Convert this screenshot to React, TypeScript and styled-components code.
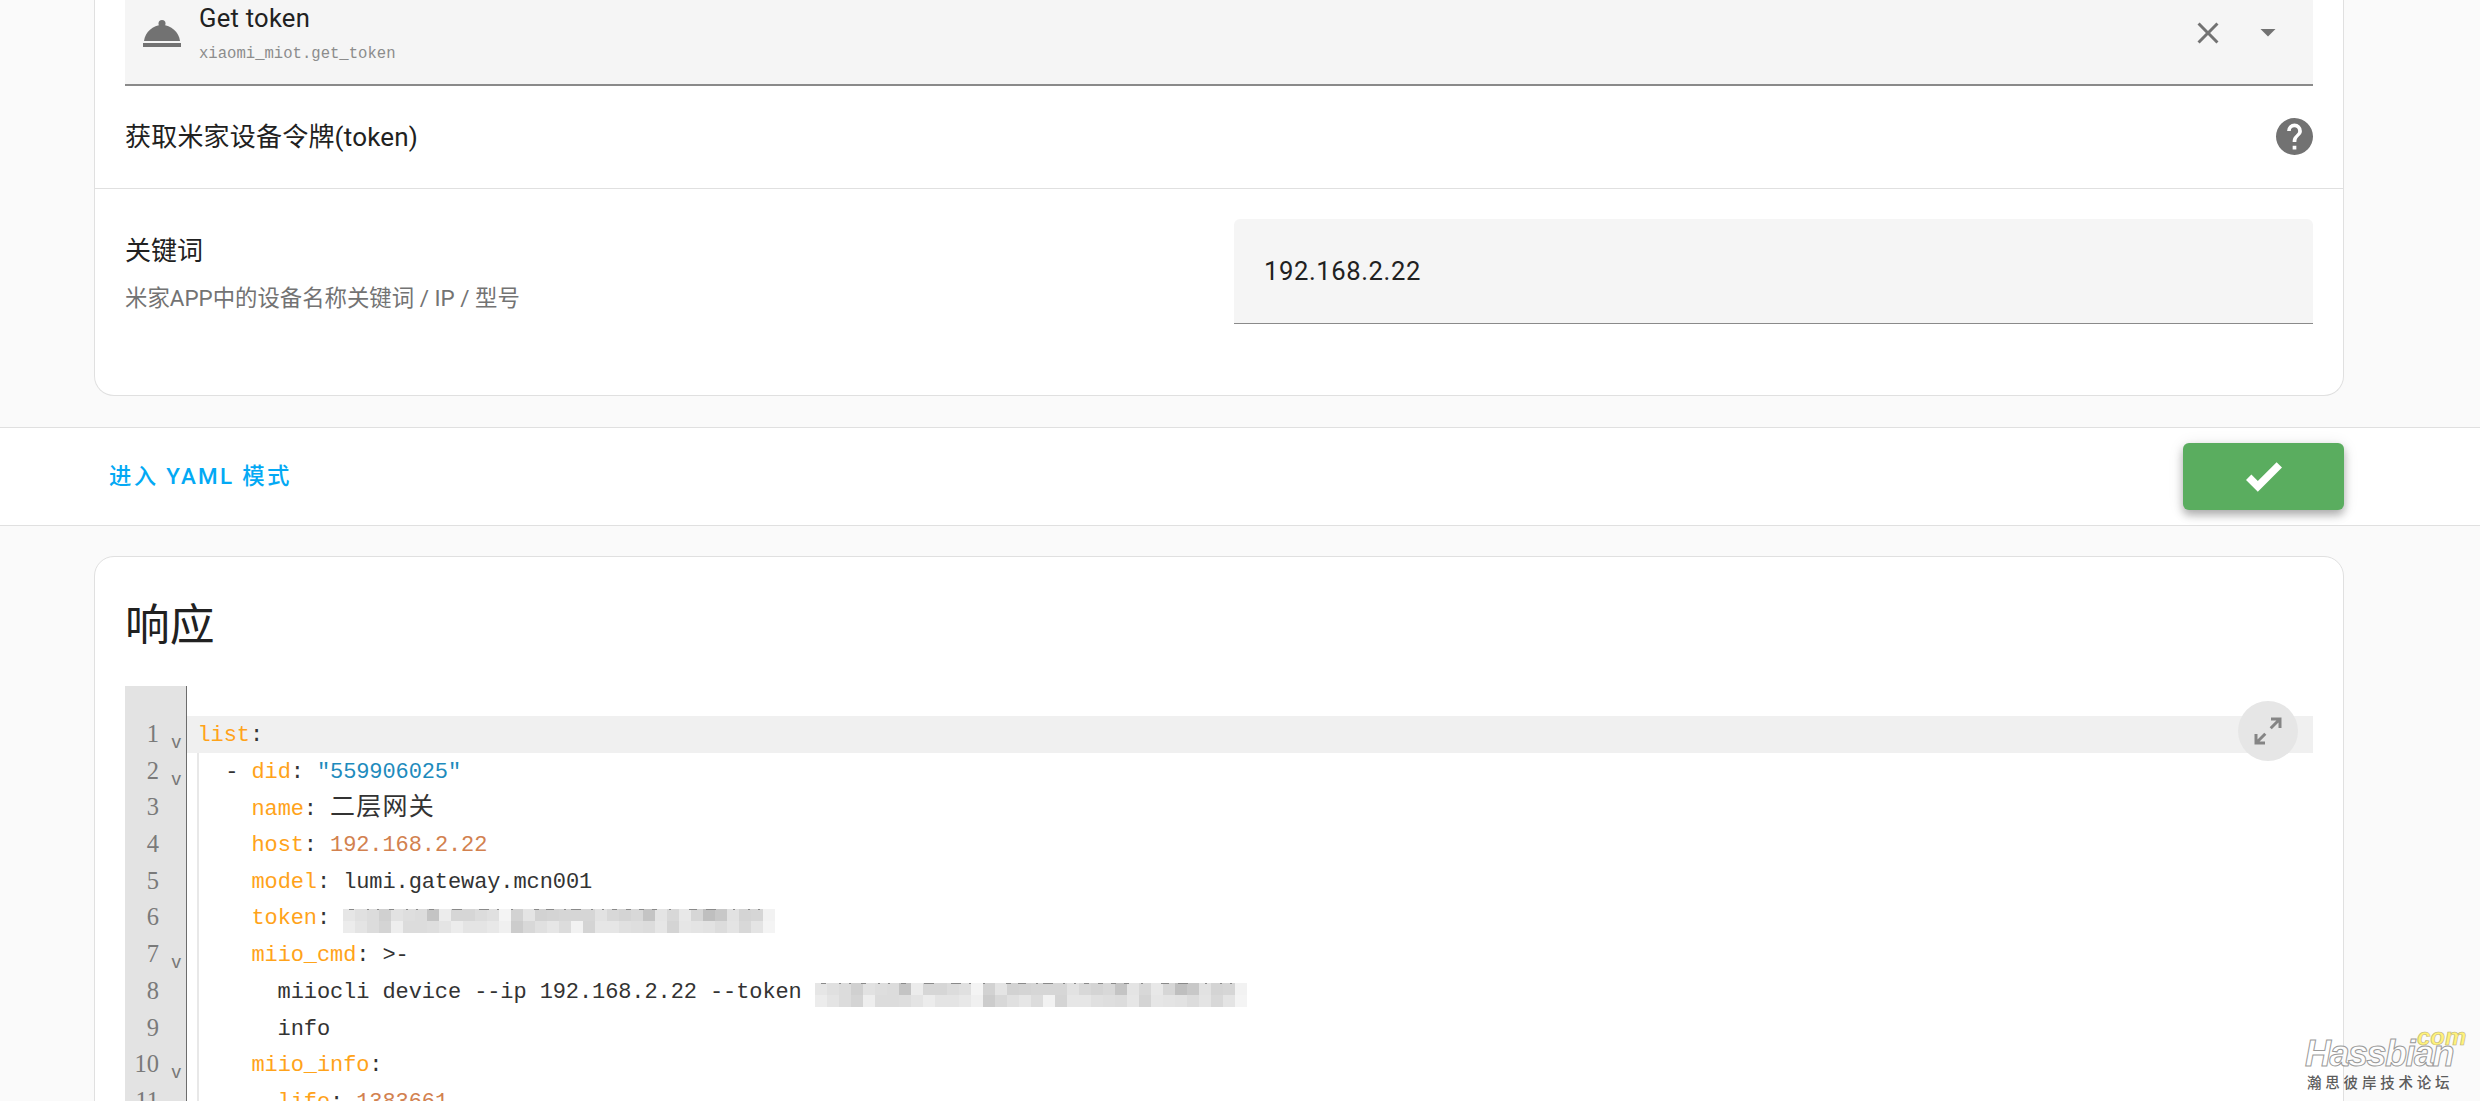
import styled, { createGlobalStyle } from "styled-components";

const SANS = `Roboto, "Noto Sans CJK SC", sans-serif`;
const MONO = `"Liberation Mono", "Noto Sans CJK SC", monospace`;

const GlobalStyle = createGlobalStyle`
  html, body {
    margin: 0;
    padding: 0;
    background: #fafafa;
  }
`;

const Page = styled.div`
  position: relative;
  height: 1101px;
  overflow: hidden;
  background: #fafafa;
  font-family: ${SANS};
  color: #212121;
`;

const Card = styled.section`
  box-sizing: border-box;
  width: 2250px;
  margin-left: 94px;
  background: #fff;
  border: 1px solid #e0e0e0;
`;

const FormCard = styled(Card)`
  height: 396px;
  border-top: none;
  border-radius: 0 0 20px 20px;
`;

const ResponseCard = styled(Card)`
  height: 560px;
  margin-top: 30px;
  padding: 0 30px;
  border-radius: 20px 20px 0 0;
`;

const Padded = styled.div`
  padding: 0 30px;
`;

const ServiceSelect = styled.div`
  box-sizing: border-box;
  height: 86px;
  display: flex;
  align-items: flex-start;
  background: #f5f5f5;
  border-bottom: 2px solid #8a8a8a;
`;

const BellIcon = styled.svg`
  flex: none;
  width: 38px;
  height: 28px;
  margin: 20px 18px 0 18px;
  fill: #727272;
`;

const ServiceText = styled.div`
  flex: 1;
  display: flex;
  flex-direction: column;
`;

const ServiceName = styled.div`
  font-size: 25.6px;
  line-height: 36px;
  letter-spacing: 0.24px;
`;

const ServiceId = styled.div`
  font-family: ${MONO};
  font-size: 15.6px;
  line-height: 20px;
  margin-top: 8px;
  color: #8c8c8c;
`;

const GreyIcon = styled.svg`
  flex: none;
  width: 36px;
  height: 36px;
  fill: #727272;
`;

const ClearIcon = styled(GreyIcon)`
  margin: 15px 0 0 0;
`;

const DropIcon = styled(GreyIcon)`
  margin: 14px 27px 0 24px;
`;

const DescriptionRow = styled.div`
  box-sizing: border-box;
  height: 103px;
  padding: 0 30px;
  display: flex;
  align-items: center;
  justify-content: space-between;
  border-bottom: 1px solid #e0e0e0;
`;

const DescriptionText = styled.span`
  padding-bottom: 5px;
  font-size: 26px;
  letter-spacing: 0.2px;
`;

const HelpIcon = styled.svg`
  width: 37px;
  height: 37px;
  margin-bottom: 2px;
  fill: #727272;
`;

const FieldRow = styled.div`
  display: flex;
  align-items: flex-start;
  padding: 30px 30px 0;
`;

const FieldLabel = styled.div`
  flex: 1;
  padding-top: 14px;
`;

const FieldName = styled.div`
  font-size: 26px;
  line-height: 36px;
`;

const FieldHint = styled.div`
  margin-top: 14px;
  font-size: 22.4px;
  line-height: 30px;
  color: #737373;
`;

const TextField = styled.div`
  box-sizing: border-box;
  width: 1079px;
  height: 105px;
  padding-left: 30px;
  display: flex;
  align-items: center;
  background: #f5f5f5;
  border-bottom: 1px solid #8a8a8a;
  border-radius: 6px 6px 0 0;
  font-size: 25.6px;
  letter-spacing: 0.6px;
`;

const ActionBar = styled.div`
  box-sizing: border-box;
  height: 99px;
  margin-top: 31px;
  padding: 0 136px 0 109px;
  display: flex;
  align-items: center;
  justify-content: space-between;
  background: #fff;
  border-top: 1px solid #e0e0e0;
  border-bottom: 1px solid #e0e0e0;
`;

const LinkButton = styled.span`
  margin-bottom: 6px;
  font-size: 22.4px;
  font-weight: 500;
  letter-spacing: 2.3px;
  color: #03a9f4;
`;

const SaveButton = styled.div`
  width: 161px;
  height: 67px;
  display: flex;
  align-items: center;
  justify-content: center;
  background: #5aad5f;
  border-radius: 6px;
  box-shadow: 0 5px 8px rgba(0, 0, 0, 0.28), 0 2px 16px rgba(0, 0, 0, 0.1);
`;

const CheckIcon = styled.svg`
  width: 36px;
  height: 30px;
  fill: #fff;
`;

const Title = styled.h1`
  margin: 0;
  padding-top: 39px;
  height: 90px;
  box-sizing: content-box;
  font-size: 44.8px;
  line-height: 60px;
  font-weight: 400;
  color: #212121;
`;

const Editor = styled.div`
  position: relative;
  display: flex;
  height: 420px;
  font-family: ${MONO};
  font-size: 22px;
  letter-spacing: -0.1px;
`;

const Gutter = styled.div`
  flex: none;
  box-sizing: border-box;
  width: 62px;
  padding-top: 30px;
  background: #e3e3e3;
  border-right: 1px solid #6c6c6c;
  color: #7a7a7a;
  font-family: "Liberation Serif", serif;
  font-size: 24.5px;
  letter-spacing: 0;
`;

const GutterRow = styled.div`
  height: 36.7px;
  line-height: 36px;
  display: flex;
  justify-content: flex-end;
  padding-right: 27px;
  position: relative;
`;

const FoldMark = styled.span`
  position: absolute;
  right: 5px;
  top: 8px;
  font-family: "Liberation Sans", sans-serif;
  font-size: 19px;
  color: #777;
`;

const Code = styled.div`
  flex: 1;
  padding-top: 30px;
  color: #333;
`;

const Line = styled.div<{ $active?: boolean }>`
  height: 36.7px;
  line-height: 39px;
  white-space: pre;
  padding-left: ${({ $active }) => ($active ? "10.5px" : "0")};
  background: ${({ $active }) => ($active ? "#f0f0f0" : "transparent")};
`;

const Nested = styled.div`
  margin-left: 10px;
  border-left: 2px solid #e8e8e8;
`;

const Key = styled.span`
  color: #ffa31a;
`;

const Str = styled.span`
  color: #1e8bbd;
`;

const Num = styled.span`
  color: #d2814f;
`;

const Cjk = styled.span`
  font-size: 25px;
  letter-spacing: 1.2px;
`;

const MosaicSvg = styled.svg`
  display: inline-block;
  vertical-align: top;
  width: 432px;
  height: 24px;
  margin-top: 10px;
`;

const ExpandButton = styled.div`
  position: absolute;
  top: 15px;
  right: 15px;
  width: 60px;
  height: 60px;
  display: flex;
  align-items: center;
  justify-content: center;
  border-radius: 50%;
  background: #e6e6e6;
`;

const ExpandIcon = styled.svg`
  width: 36px;
  height: 36px;
  fill: #858585;
`;

const Watermark = styled.div`
  position: absolute;
  left: 2305px;
  top: 1030px;
  width: 160px;
  height: 64px;
`;

const WatermarkName = styled.span`
  position: absolute;
  left: 0;
  top: 4px;
  font-family: "Liberation Sans", sans-serif;
  font-size: 36px;
  line-height: 40px;
  font-weight: 700;
  font-style: italic;
  letter-spacing: -1.5px;
  color: rgba(255, 255, 255, 0.75);
  -webkit-text-stroke: 1px #9a9a9a;
`;

const WatermarkCom = styled.span`
  position: absolute;
  left: 112px;
  top: -3px;
  font-family: "Liberation Sans", sans-serif;
  font-size: 24px;
  line-height: 20px;
  font-weight: 700;
  font-style: italic;
  color: #fff27a;
  -webkit-text-stroke: 0.6px #b9b07a;
`;

const WatermarkTag = styled.span`
  position: absolute;
  left: 2px;
  top: 45px;
  font-size: 14.5px;
  line-height: 18px;
  font-weight: 500;
  letter-spacing: 3.8px;
  white-space: nowrap;
  color: #5c5c5c;
`;

const TOP_SHADES = "e6 e0 dc d0 e2 de dc c4 ec d6 d6 dc e0 f4 d2 e4 d2 d4 d6 d6 d6 e2 d8 d4 d8 c4 e4 d8 e8 d6 bf c8 e2 d4 d6 f2".split(" ");
const BOTTOM_SHADES = "ec e4 dc d4 ee dc dc de e4 ec e4 e4 e8 f0 cc d8 e0 e6 dc f2 d4 e6 e6 e0 de dc e6 d4 e6 e4 e2 dc e4 d8 e4 f4".split(" ");
// leftover tops of the digits above the blur: [x, width]
const TICKS = [[6, 5], [24, 2], [34, 2], [46, 5], [63, 2], [73, 2], [86, 5], [109, 10], [136, 10], [154, 2], [168, 2], [191, 5], [203, 8], [221, 2], [228, 10], [248, 2], [259, 2], [269, 5], [283, 5], [296, 5], [309, 5], [326, 2], [346, 8], [363, 10], [390, 2], [405, 2], [415, 2]];

const Mosaic = () => (
  <MosaicSvg viewBox="0 0 432 24" aria-hidden="true">
    {TOP_SHADES.map((s, i) => (
      <rect key={`t${i}`} x={i * 12} y={0} width={12.2} height={12} fill={`#${s}${s}${s}`} />
    ))}
    {BOTTOM_SHADES.map((s, i) => (
      <rect key={`b${i}`} x={i * 12} y={12} width={12.2} height={12} fill={`#${s}${s}${s}`} />
    ))}
    {TICKS.map(([x, w]) => (
      <rect key={x} x={x} y={0} width={w} height={1} fill="#8a8a8a" />
    ))}
  </MosaicSvg>
);

const FOLDABLE = [1, 2, 7, 10];

export default function App() {
  return (
    <Page>
      <GlobalStyle />
      <FormCard>
        <Padded>
          <ServiceSelect>
            <BellIcon viewBox="0 0 38 28">
              <circle cx="19" cy="3.5" r="3.5" />
              <path d="M1 21C2 12 10 5 19 5C28 5 36 12 37 21Z" />
              <rect x="0" y="23" width="38" height="4" />
            </BellIcon>
            <ServiceText>
              <ServiceName>Get token</ServiceName>
              <ServiceId>xiaomi_miot.get_token</ServiceId>
            </ServiceText>
            <ClearIcon viewBox="0 0 24 24">
              <path d="M19,6.41L17.59,5L12,10.59L6.41,5L5,6.41L10.59,12L5,17.59L6.41,19L12,13.41L17.59,19L19,17.59L13.41,12L19,6.41Z" />
            </ClearIcon>
            <DropIcon viewBox="0 0 24 24">
              <path d="M7,10L12,15L17,10H7Z" />
            </DropIcon>
          </ServiceSelect>
        </Padded>
        <DescriptionRow>
          <DescriptionText>获取米家设备令牌(token)</DescriptionText>
          <HelpIcon viewBox="2 2 20 20">
            <path d="M15.07,11.25L14.17,12.17C13.45,12.89 13,13.5 13,15H11V14.5C11,13.39 11.45,12.39 12.17,11.67L13.41,10.41C13.78,10.05 14,9.55 14,9C14,7.89 13.1,7 12,7A2,2 0 0,0 10,9H8A4,4 0 0,1 12,5A4,4 0 0,1 16,9C16,9.88 15.64,10.67 15.07,11.25M13,19H11V17H13M12,2A10,10 0 0,0 2,12A10,10 0 0,0 12,22A10,10 0 0,0 22,12C22,6.47 17.5,2 12,2Z" />
          </HelpIcon>
        </DescriptionRow>
        <FieldRow>
          <FieldLabel>
            <FieldName>关键词</FieldName>
            <FieldHint>米家APP中的设备名称关键词 / IP / 型号</FieldHint>
          </FieldLabel>
          <TextField>192.168.2.22</TextField>
        </FieldRow>
      </FormCard>

      <ActionBar>
        <LinkButton>进入 YAML 模式</LinkButton>
        <SaveButton>
          <CheckIcon viewBox="2.79 4.88 18.92 15.54">
            <path d="M9,20.42L2.79,14.21L5.62,11.38L9,14.77L18.88,4.88L21.71,7.71L9,20.42Z" />
          </CheckIcon>
        </SaveButton>
      </ActionBar>

      <ResponseCard>
        <Title>响应</Title>
        <Editor>
          <Gutter>
            {Array.from({ length: 11 }, (_, i) => i + 1).map((n) => (
              <GutterRow key={n}>
                {n}
                {FOLDABLE.includes(n) && <FoldMark>v</FoldMark>}
              </GutterRow>
            ))}
          </Gutter>
          <Code>
            <Line $active>
              <Key>list</Key>:
            </Line>
            <Nested>
              <Line>
                {"  - "}
                <Key>did</Key>
                {": "}
                <Str>"559906025"</Str>
              </Line>
              <Line>
                {"    "}
                <Key>name</Key>
                {": "}
                <Cjk>二层网关</Cjk>
              </Line>
              <Line>
                {"    "}
                <Key>host</Key>
                {": "}
                <Num>192.168.2.22</Num>
              </Line>
              <Line>
                {"    "}
                <Key>model</Key>
                {": lumi.gateway.mcn001"}
              </Line>
              <Line>
                {"    "}
                <Key>token</Key>
                {": "}
                <Mosaic />
              </Line>
              <Line>
                {"    "}
                <Key>miio_cmd</Key>
                {": >-"}
              </Line>
              <Line>
                {"      miiocli device --ip 192.168.2.22 --token "}
                <Mosaic />
              </Line>
              <Line>{"      info"}</Line>
              <Line>
                {"    "}
                <Key>miio_info</Key>:
              </Line>
              <Line>
                {"      "}
                <Key>life</Key>
                {": "}
                <Num>1383661</Num>
              </Line>
            </Nested>
          </Code>
          <ExpandButton>
            <ExpandIcon viewBox="0 0 24 24">
              <path d="M10,21V19H6.41L10.91,14.5L9.5,13.09L5,17.59V14H3V21H10M14.5,10.91L19,6.41V10H21V3H14V5H17.59L13.09,9.5L14.5,10.91Z" />
            </ExpandIcon>
          </ExpandButton>
        </Editor>
      </ResponseCard>

      <Watermark>
        <WatermarkName>Hassbian</WatermarkName>
        <WatermarkCom>com</WatermarkCom>
        <WatermarkTag>瀚思彼岸技术论坛</WatermarkTag>
      </Watermark>
    </Page>
  );
}
